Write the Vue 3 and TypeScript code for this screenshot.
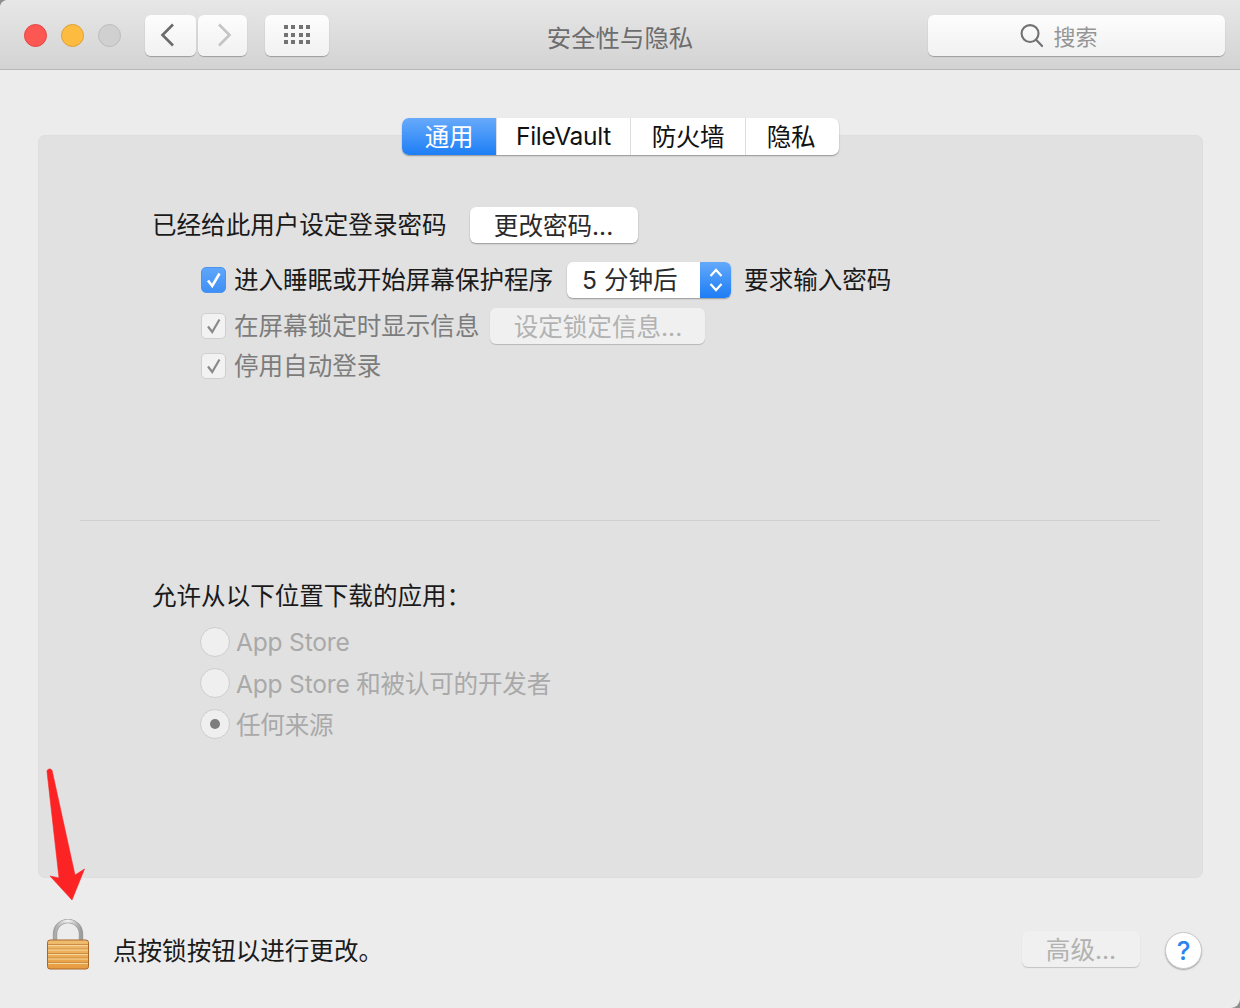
<template>
  <div class="window">
    <header class="titlebar">
      <div class="lights">
        <span class="light red"></span>
        <span class="light yellow"></span>
        <span class="light gray"></span>
      </div>
      <div class="nav">
        <button type="button" class="tool back" aria-label="后退">
          <svg width="18" height="26" viewBox="0 0 18 26" fill="none" stroke="#6b6b6b" stroke-width="2.6">
            <path d="M14 2.5 3.5 13 14 23.5" />
          </svg>
        </button>
        <button type="button" class="tool forward" aria-label="前进">
          <svg width="18" height="26" viewBox="0 0 18 26" fill="none" stroke="#c4c4c4" stroke-width="2.6">
            <path d="M4 2.5 14.5 13 4 23.5" />
          </svg>
        </button>
      </div>
      <button type="button" class="tool grid-btn" aria-label="全部显示">
        <span class="dots">
          <i v-for="n in 12" :key="n"></i>
        </span>
      </button>
      <h1 class="title">安全性与隐私</h1>
      <div class="search">
        <svg width="25" height="25" viewBox="0 0 26 26" fill="none" stroke="#717171" stroke-width="2.2">
          <circle cx="11.5" cy="11" r="8.8" />
          <path d="M17.8 17.4 24 24" stroke-linecap="round" />
        </svg>
        <span>搜索</span>
      </div>
    </header>

    <main class="panel">
      <nav class="tabs">
        <span v-for="tab in tabs" :key="tab.label" class="tab" :class="{ active: tab.active }" :style="{ width: tab.width + 'px' }">{{ tab.label }}</span>
      </nav>

      <section class="general">
        <div class="row first">
          <span class="label">已经给此用户设定登录密码</span>
          <button type="button" class="btn change">更改密码...</button>
        </div>
        <div class="row indent second">
          <span class="check on">
            <svg width="18" height="18" viewBox="0 0 18 18" fill="none" stroke="#fff" stroke-width="2.6"><path d="M3 9.5 7.2 15 14.5 2.5" /></svg>
          </span>
          <span class="label">进入睡眠或开始屏幕保护程序</span>
          <div class="popup">
            <span class="popup-value">5 分钟后</span>
            <span class="popup-arrows">
              <svg width="16" height="28" viewBox="0 0 16 28" fill="none" stroke="#fff" stroke-width="2.2">
                <path d="M2.5 10 8 4l5.5 6" />
                <path d="M2.5 18 8 24l5.5-6" />
              </svg>
            </span>
          </div>
          <span class="label require">要求输入密码</span>
        </div>
        <div class="row indent third">
          <span class="check">
            <svg width="18" height="18" viewBox="0 0 18 18" fill="none" stroke="#8a8a8a" stroke-width="2.2"><path d="M3 9.5 7.2 15 14.5 2.5" /></svg>
          </span>
          <span class="label muted">在屏幕锁定时显示信息</span>
          <button type="button" class="btn disabled lock-msg">设定锁定信息...</button>
        </div>
        <div class="row indent fourth">
          <span class="check">
            <svg width="18" height="18" viewBox="0 0 18 18" fill="none" stroke="#8a8a8a" stroke-width="2.2"><path d="M3 9.5 7.2 15 14.5 2.5" /></svg>
          </span>
          <span class="label muted">停用自动登录</span>
        </div>
      </section>

      <hr class="divider" />

      <section class="downloads">
        <div class="label heading">允许从以下位置下载的应用：</div>
        <div v-for="item in sources" :key="item.label" class="radio-row">
          <span class="radio"><i v-if="item.selected"></i></span>
          <span class="radio-label">{{ item.label }}</span>
        </div>
      </section>
    </main>

    <footer class="footer">
      <svg class="lock" width="42" height="51" viewBox="0 0 42 51">
        <defs>
          <linearGradient id="shackle" x1="0" y1="0" x2="1" y2="0">
            <stop offset="0" stop-color="#a9a9a9" />
            <stop offset="0.5" stop-color="#f4f4f4" />
            <stop offset="1" stop-color="#9b9b9b" />
          </linearGradient>
          <linearGradient id="body" x1="0" y1="0" x2="0" y2="1">
            <stop offset="0" stop-color="#efbe72" />
            <stop offset="1" stop-color="#e79a3e" />
          </linearGradient>
        </defs>
        <path d="M8 22v-7a13 13 0 0 1 26 0v7" fill="none" stroke="#9c9c9c" stroke-width="4.4" />
        <path d="M8 22v-7a13 13 0 0 1 26 0v7" fill="none" stroke="url(#shackle)" stroke-width="2.8" />
        <rect x="0.5" y="21" width="41" height="29" rx="2.5" fill="url(#body)" stroke="#a9682a" />
        <path d="M1 25.5h40M1 30h40M1 34.5h40M1 39h40M1 43.5h40" stroke="#cc8d42" stroke-width="1" />
        <path d="M1 26.5h40M1 31h40M1 35.5h40M1 40h40M1 44.5h40" stroke="#f8d79a" stroke-width="1" />
      </svg>
      <span class="label lock-text">点按锁按钮以进行更改。</span>
      <button type="button" class="btn disabled advanced">高级...</button>
      <button type="button" class="help" aria-label="帮助">?</button>
    </footer>

    <svg class="arrow" width="50" height="136" viewBox="0 0 50 136">
      <path d="M3 4.5C3 1.5 7.5 1 8.2 4L31 108l9.5-6L28 133 6 109l9 2Z" fill="#fb2323" stroke="#fb2323" stroke-width="0.6" stroke-linejoin="round" />
    </svg>
  </div>
</template>

<script setup lang="ts">
const tabs = [
  { label: '通用', width: 94, active: true },
  { label: 'FileVault', width: 134, active: false },
  { label: '防火墙', width: 115, active: false },
  { label: '隐私', width: 94, active: false },
]

const sources = [
  { label: 'App Store', selected: false },
  { label: 'App Store 和被认可的开发者', selected: false },
  { label: '任何来源', selected: true },
]
</script>

<style>
html,
body {
  margin: 0;
  background: #8f8f8f;
}
</style>

<style scoped>
.window {
  position: relative;
  width: 1240px;
  height: 1008px;
  overflow: hidden;
  border-radius: 8px 0 9px 0;
  background: #ececec;
  font-family: Inter, "Noto Sans CJK SC", sans-serif;
  font-size: 24.55px;
  color: #1a1a1a;
}

.titlebar {
  position: relative;
  display: flex;
  align-items: center;
  box-sizing: border-box;
  height: 70px;
  padding: 1px 15px 0 24px;
  background: linear-gradient(#e8e7e8, #d4d3d4);
  border-bottom: 1px solid #b9b8b9;
}

.lights {
  display: flex;
  gap: 14px;
  margin-right: 24px;
}

.light {
  width: 23px;
  height: 23px;
  box-sizing: border-box;
  border-radius: 50%;
  border: 1px solid transparent;
}

.red {
  background: #fc5753;
  border-color: #df4744;
}

.yellow {
  background: #fdbc40;
  border-color: #dea034;
}

.gray {
  background: #d1d0d1;
  border-color: #bdbcbd;
}

.nav {
  display: flex;
  gap: 2px;
  margin-right: 18px;
}

.tool {
  display: flex;
  align-items: center;
  justify-content: center;
  box-sizing: border-box;
  height: 41px;
  padding: 0;
  border: none;
  border-radius: 6px;
  background: linear-gradient(#fdfdfd, #f1f1f1);
  box-shadow: 0 1px 1px rgba(0, 0, 0, 0.28);
}

.back {
  width: 51px;
  padding-right: 5px;
}

.forward {
  width: 49px;
  padding-left: 2px;
}

.grid-btn {
  width: 64px;
}

.dots {
  display: grid;
  grid-template-columns: repeat(4, 4px);
  gap: 3.5px 3.4px;
  margin-top: -1px;
}

.dots i {
  width: 4px;
  height: 4px;
  background: #737373;
}

.title {
  position: absolute;
  left: 0;
  right: 0;
  top: 20px;
  margin: 0;
  text-align: center;
  font-size: 24.4px;
  line-height: 36px;
  font-weight: 400;
  color: #6d6d6d;
}

.search {
  display: flex;
  align-items: center;
  justify-content: center;
  gap: 9px;
  box-sizing: border-box;
  width: 297px;
  height: 41px;
  margin-left: auto;
  padding-right: 36px;
  border-radius: 6px;
  background: linear-gradient(#fdfdfd, #f1f1f1);
  box-shadow: 0 1px 1px rgba(0, 0, 0, 0.28);
  font-size: 22px;
  color: #959595;
}

.panel {
  box-sizing: border-box;
  width: 1165px;
  height: 743px;
  margin: 65px 0 0 38px;
  background: #e1e1e1;
  border: 1px solid #dedede;
  border-radius: 7px;
}

.tabs {
  display: flex;
  width: max-content;
  height: 37px;
  margin: -18px 0 0 363px;
  border-radius: 7px;
  background: #fff;
  box-shadow: 0 1px 1.5px rgba(0, 0, 0, 0.35);
  overflow: hidden;
}

.tab {
  display: flex;
  align-items: center;
  justify-content: center;
  box-sizing: border-box;
  padding-bottom: 2px;
  border-left: 1px solid #dddddd;
  letter-spacing: -0.3px;
  color: #111;
}

.tab:first-child {
  border-left: none;
}

.tab:last-child {
  padding-right: 3px;
}

.tab.active {
  background: linear-gradient(#67aafb, #1d7ef5);
  color: #fff;
}

.general {
  margin-top: 52px;
  padding-left: 113px;
}

.row {
  display: flex;
  align-items: center;
  height: 36px;
}

.indent {
  padding-left: 49px;
}

.second {
  margin-top: 19px;
}

.third {
  margin-top: 10px;
}

.fourth {
  margin-top: 4px;
}

.label {
  white-space: nowrap;
  line-height: 36px;
}

.muted {
  color: #7c7c7c;
}

.btn {
  box-sizing: border-box;
  height: 36px;
  padding: 0 0 3px;
  border: none;
  border-radius: 6px;
  background: #fff;
  box-shadow: 0 1px 1.5px rgba(0, 0, 0, 0.32);
  font: inherit;
  color: #2a2a2a;
}

.btn.disabled {
  background: #f0f0f0;
  box-shadow: 0 1px 1px rgba(0, 0, 0, 0.18);
  color: #b2b2b2;
}

.change {
  width: 168px;
  margin-left: 23px;
}

.lock-msg {
  width: 215px;
  margin-left: 11px;
}

.check {
  display: flex;
  align-items: center;
  justify-content: center;
  box-sizing: border-box;
  width: 25px;
  height: 26px;
  margin-right: 8px;
  border-radius: 5px;
  background: #f2f2f2;
  border: 1px solid #cfcfcf;
}

.check.on {
  background: linear-gradient(#5fa6fa, #3f8ff5);
  border-color: #4a93f2;
}

.popup {
  display: flex;
  box-sizing: border-box;
  width: 164px;
  height: 36px;
  margin-left: 14px;
  border-radius: 6px;
  overflow: hidden;
  background: #fff;
  box-shadow: 0 1px 1.5px rgba(0, 0, 0, 0.32);
}

.popup-value {
  flex: 1;
  padding-left: 15px;
  line-height: 36px;
  color: #2a2a2a;
}

.popup-arrows {
  display: flex;
  align-items: center;
  justify-content: center;
  width: 31px;
  background: linear-gradient(#64a9fb, #1c7df5);
}

.require {
  margin-left: 13px;
}

.divider {
  width: 1080px;
  height: 1px;
  margin: 136px 0 0 41px;
  border: none;
  background: #cfcfcf;
}

.downloads {
  margin-top: 57px;
  padding-left: 113px;
}

.radio-row {
  display: flex;
  align-items: center;
  height: 41px;
  padding-left: 48px;
}

.heading {
  margin-bottom: 7px;
}

.radio {
  display: flex;
  align-items: center;
  justify-content: center;
  box-sizing: border-box;
  width: 30px;
  height: 30px;
  margin-right: 5px;
  border-radius: 50%;
  background: #efefef;
  border: 1px solid #cdcdcd;
}

.radio i {
  width: 10px;
  height: 10px;
  border-radius: 50%;
  background: #7d7d7d;
}

.radio-label {
  white-space: nowrap;
  letter-spacing: -0.2px;
  padding-left: 1px;
  color: #a9a9a9;
}

.footer {
  display: flex;
  align-items: center;
  height: 130px;
  padding: 0 38px 0 47px;
}

.lock {
  flex-shrink: 0;
  margin-top: 2px;
}

.lock-text {
  margin: 16px 0 0 24px;
}

.advanced {
  width: 118px;
  height: 36px;
  margin: 12px 0 0 auto;
}

.help {
  display: flex;
  align-items: center;
  justify-content: center;
  box-sizing: border-box;
  width: 37px;
  height: 37px;
  margin: 14px 0 0 25px;
  padding: 0;
  border: 1px solid #c9c9c9;
  border-radius: 50%;
  background: #fff;
  box-shadow: 0 1px 1.5px rgba(0, 0, 0, 0.3);
  font-family: inherit;
  font-size: 26px;
  font-weight: 500;
  color: #2a84ee;
}

.arrow {
  position: absolute;
  left: 44px;
  top: 767px;
}
</style>
